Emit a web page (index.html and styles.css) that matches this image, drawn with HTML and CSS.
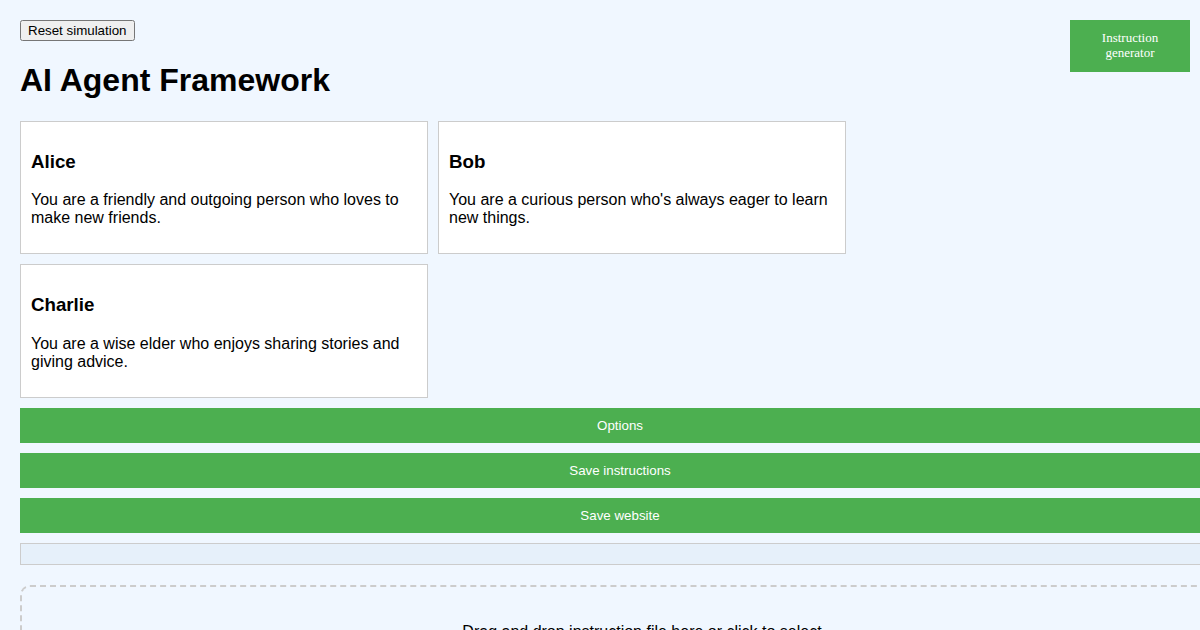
FILE: index.html
```html
<!DOCTYPE html>
<html lang="en">
<head>
<meta charset="utf-8">
<title>AI Agent Framework</title>
<link rel="stylesheet" href="styles.css">
</head>
<body>
<div class="page">
<button class="reset-btn">Reset simulation</button>
<div class="gen-btn">Instruction generator</div>
<h1 class="title">AI Agent Framework</h1>
<div class="agents">
  <div class="agent-card">
    <h3>Alice</h3>
    <p>You are a friendly and outgoing person who loves to make new friends.</p>
  </div>
  <div class="agent-card">
    <h3>Bob</h3>
    <p>You are a curious person who's always eager to learn new things.</p>
  </div>
  <div class="agent-card">
    <h3>Charlie</h3>
    <p>You are a wise elder who enjoys sharing stories and giving advice.</p>
  </div>
</div>
<button class="wide-btn">Options</button>
<button class="wide-btn">Save instructions</button>
<button class="wide-btn">Save website</button>
<div class="status-box"></div>
<div class="drop-zone">
  <p>Drag and drop instruction file here or click to select</p>
</div>
</div>
</body>
</html>
```
FILE: styles.css
```css
html {
  background: #f0f7ff;
}
body {
  margin: 0;
  padding: 20px;
  font-family: "Liberation Sans", Arial, sans-serif;
  background: #f0f7ff;
  color: #000;
}
.page {
  width: 1160px;
}
.reset-btn {
  font-family: "Liberation Sans", Arial, sans-serif;
  font-size: 13.333px;
}
.gen-btn {
  position: fixed;
  top: 20px;
  right: 10px;
  width: 100px;
  padding: 10px 10px 12px;
  background: #4caf50;
  color: #fff;
  font-family: "Liberation Serif", "Times New Roman", serif;
  font-size: 13px;
  line-height: 15px;
  text-align: center;
}
.title {
  font-size: 32px;
  margin: 21.44px 0;
}
.agents {
  display: flex;
  flex-wrap: wrap;
  gap: 10px;
  margin-bottom: 10px;
}
.agent-card {
  width: 386px;
  padding: 10px;
  background: #fff;
  border: 1px solid #ccc;
}
.agent-card h3 {
  font-size: 18.72px;
  margin: 18.72px 0;
}
.agent-card p {
  font-size: 16px;
  margin: 16px 0;
}
.wide-btn {
  display: block;
  box-sizing: content-box;
  width: 100%;
  padding: 10px 20px;
  margin: 0 0 10px;
  border: none;
  background: #4caf50;
  color: #fff;
  font-family: "Liberation Sans", Arial, sans-serif;
  font-size: 13.333px;
  line-height: 15px;
}
.status-box {
  width: 100%;
  padding: 10px;
  background: #e6f0fa;
  border: 1px solid #ccc;
  margin-bottom: 20px;
}
.drop-zone {
  width: 100%;
  padding: 20px 40px;
  border: 2px dashed #ccc;
  border-radius: 10px;
  text-align: center;
  font-size: 16px;
}
.drop-zone p {
  margin: 16px 0;
}
```
